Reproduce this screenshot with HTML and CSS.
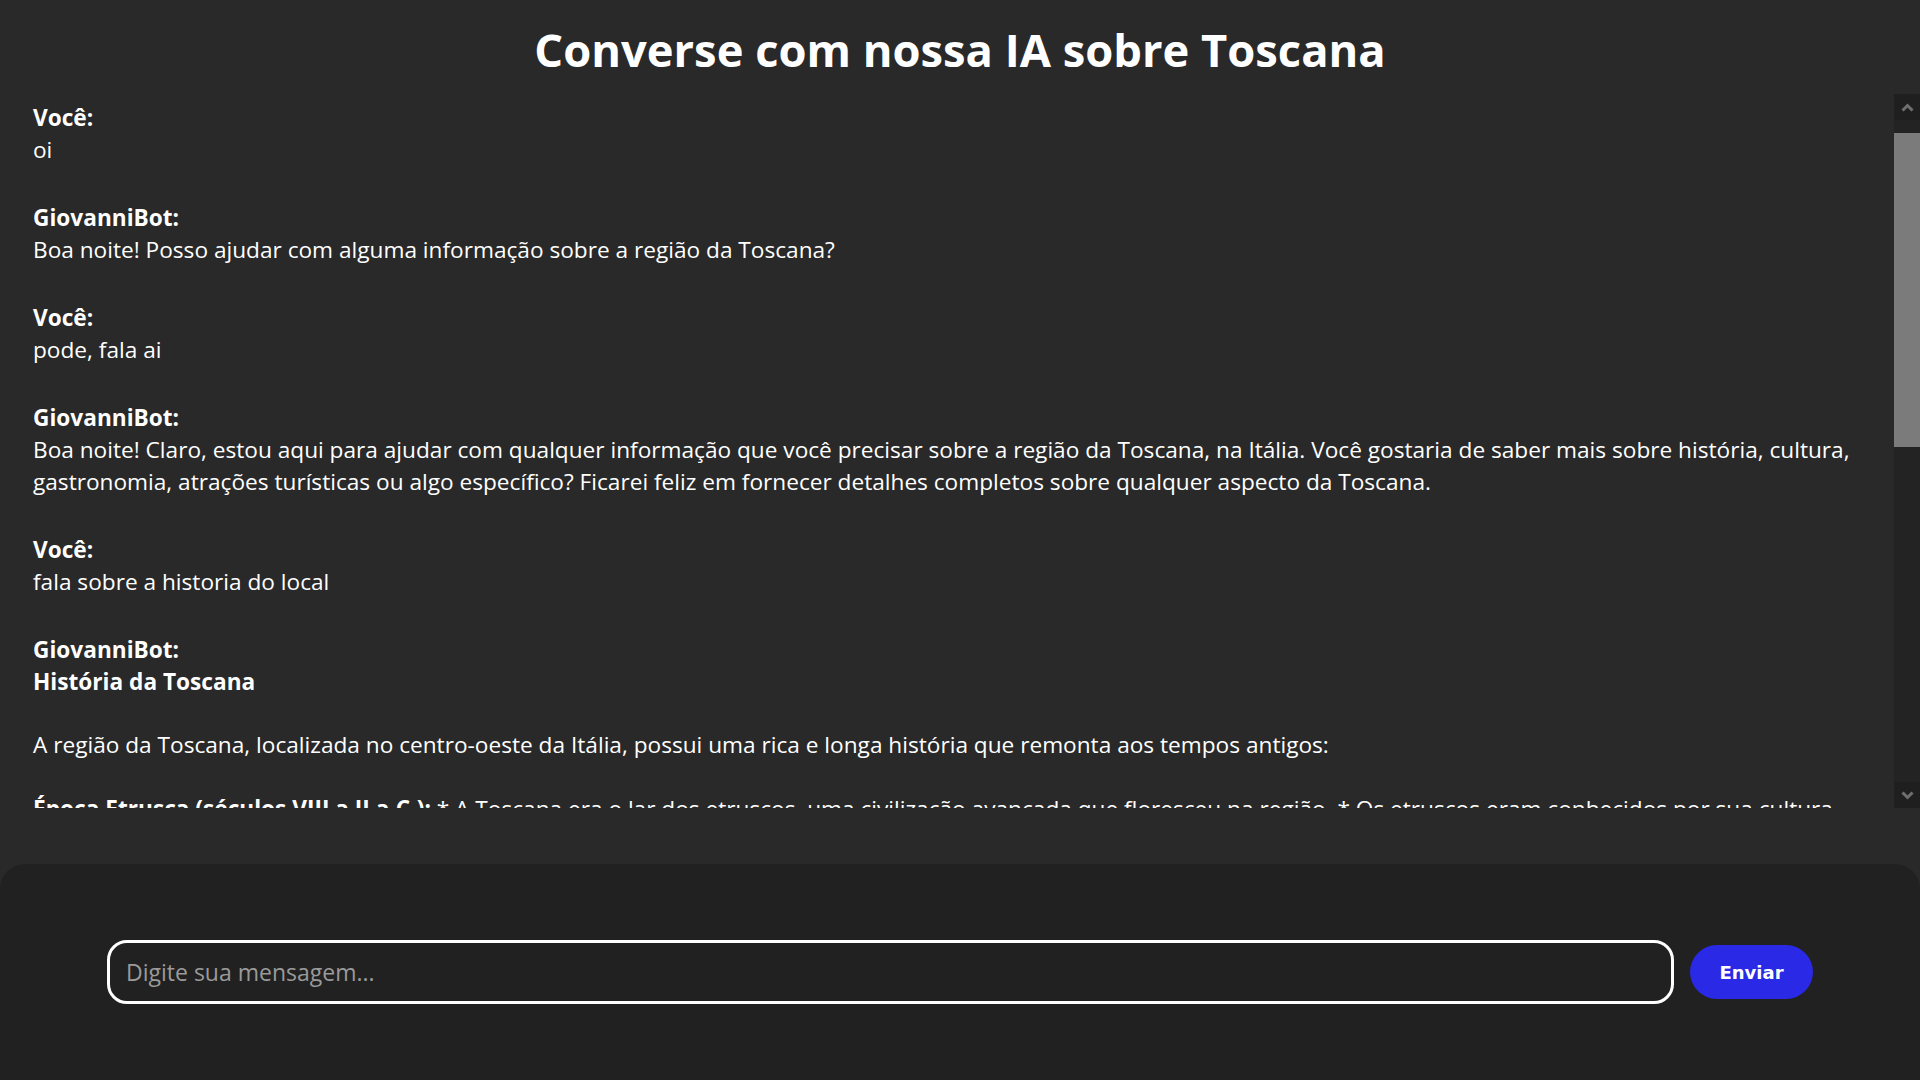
FILE: index.html
```html
<!DOCTYPE html>
<html lang="pt-BR">
<head>
<meta charset="utf-8">
<title>Converse com nossa IA sobre Toscana</title>
<link rel="stylesheet" href="styles.css">
</head>
<body class="page">
  <h1 class="title">Converse com nossa IA sobre Toscana</h1>
  <div class="chat">
    <div class="messages">
      <div class="msg">
        <div class="who">Você:</div>
        <div class="text">oi</div>
      </div>
      <div class="msg">
        <div class="who">GiovanniBot:</div>
        <div class="text">Boa noite! Posso ajudar com alguma informação sobre a região da Toscana?</div>
      </div>
      <div class="msg">
        <div class="who">Você:</div>
        <div class="text">pode, fala ai</div>
      </div>
      <div class="msg">
        <div class="who">GiovanniBot:</div>
        <div class="text">Boa noite! Claro, estou aqui para ajudar com qualquer informação que você precisar sobre a região da Toscana, na Itália. Você gostaria de saber mais sobre história, cultura, gastronomia, atrações turísticas ou algo específico? Ficarei feliz em fornecer detalhes completos sobre qualquer aspecto da Toscana.</div>
      </div>
      <div class="msg">
        <div class="who">Você:</div>
        <div class="text">fala sobre a historia do local</div>
      </div>
      <div class="msg">
        <div class="who">GiovanniBot:</div>
        <div class="text">
          <p class="para"><strong>História da Toscana</strong></p>
          <p class="para gap">A região da Toscana, localizada no centro-oeste da Itália, possui uma rica e longa história que remonta aos tempos antigos:</p>
          <p class="para gap"><strong>Época Etrusca (séculos VIII a II a.C.):</strong> * A Toscana era o lar dos etruscos, uma civilização avançada que floresceu na região. * Os etruscos eram conhecidos por sua cultura refinada, sua arte funerária e suas habilidades em metalurgia e comércio.</p>
          <p class="para gap"><strong>Domínio Romano (séculos II a.C. a V d.C.):</strong> * Os romanos conquistaram a região e fundaram cidades importantes, como Florença (Florentia), Lucca e Pisa. * A Toscana tornou-se uma parte importante do Império Romano, com estradas, aquedutos e anfiteatros.</p>
          <p class="para gap"><strong>Idade Média (séculos V a XV):</strong> * Após a queda do Império Romano, a região foi governada por lombardos e francos. * Surgiram as poderosas cidades-estado de Florença, Siena, Pisa e Lucca, que competiam entre si pelo comércio e pelo poder.</p>
          <p class="para gap"><strong>Renascimento (séculos XIV a XVI):</strong> * Florença tornou-se o berço do Renascimento, sob o patrocínio da família Médici. * Artistas e pensadores como Leonardo da Vinci, Michelangelo, Botticelli, Dante e Maquiavel deixaram um legado inestimável para o mundo.</p>
        </div>
      </div>
    </div>
    <div class="scrollbar" aria-hidden="true">
      <div class="sb-btn">
        <svg class="sb-icon" viewBox="0 0 13 9" width="13" height="9"><path d="M1.5 7.5 L6.5 2.5 L11.5 7.5" fill="none" stroke="#6f6f6f" stroke-width="3"/></svg>
      </div>
      <div class="sb-track">
        <div class="sb-thumb"></div>
      </div>
      <div class="sb-btn">
        <svg class="sb-icon" viewBox="0 0 13 9" width="13" height="9"><path d="M1.5 1.5 L6.5 6.5 L11.5 1.5" fill="none" stroke="#6f6f6f" stroke-width="3"/></svg>
      </div>
    </div>
  </div>
  <div class="composer">
    <input class="field" type="text" placeholder="Digite sua mensagem..." autofocus>
    <button class="send" type="button">Enviar</button>
  </div>
</body>
</html>
```

FILE: styles.css
```css
html, body {
  margin: 0;
  padding: 0;
}

.page {
  background: #292929;
  color: #ffffff;
  font-family: "Open Sans", "Noto Sans", sans-serif;
  height: 100vh;
  display: flex;
  flex-direction: column;
  overflow: hidden;
}

.title {
  margin: 0 0 14px;
  padding-top: 20px;
  font-size: 45.3px;
  line-height: 60px;
  font-weight: 700;
  text-align: center;
  color: #ffffff;
}

.chat {
  height: 714px;
  flex: none;
  display: flex;
}

.messages {
  flex: 1;
  min-width: 0;
  overflow: hidden;
  box-sizing: border-box;
  padding: 8px 33px 0 33px;
  font-size: 22.65px;
  line-height: 31.75px;
}

.scrollbar {
  flex: none;
  width: 26px;
  display: flex;
  flex-direction: column;
  background: #232323;
}

.sb-btn {
  height: 26px;
  flex: none;
  background: #1f1f1f;
  display: flex;
  align-items: center;
  justify-content: center;
}

.sb-icon {
  display: block;
}

.sb-track {
  flex: 1;
  padding-top: 13px;
}

.sb-thumb {
  height: 314px;
  background: #7b7b7b;
}

.msg {
  margin-bottom: 36.6px;
}

.who {
  font-weight: 700;
}

.text {
  font-weight: 400;
}

.para {
  margin: 0;
}

.para.gap {
  margin-top: 31.75px;
}

.para strong {
  font-weight: 700;
}

.composer {
  margin-top: 56px;
  flex: none;
  height: 216px;
  box-sizing: border-box;
  background: #212121;
  border-radius: 25px 25px 0 0;
  display: flex;
  align-items: center;
  gap: 16px;
  padding: 0 107px;
}

.field {
  flex: 1;
  height: 64px;
  box-sizing: border-box;
  border: 3px solid #ffffff;
  border-radius: 20px;
  background: transparent;
  color: #ffffff;
  caret-color: #ffffff;
  padding: 0 16px;
  font-family: "Open Sans", "Noto Sans", sans-serif;
  font-size: 23px;
  outline: none;
}

.field::placeholder {
  color: #9a9a9a;
}

.send {
  flex: none;
  width: 123px;
  height: 54px;
  border: none;
  border-radius: 27px;
  background: #2a2ae6;
  color: #ffffff;
  font-family: "DejaVu Sans", "Verdana", sans-serif;
  font-weight: 700;
  font-size: 18px;
  padding: 0;
  cursor: pointer;
}
```
